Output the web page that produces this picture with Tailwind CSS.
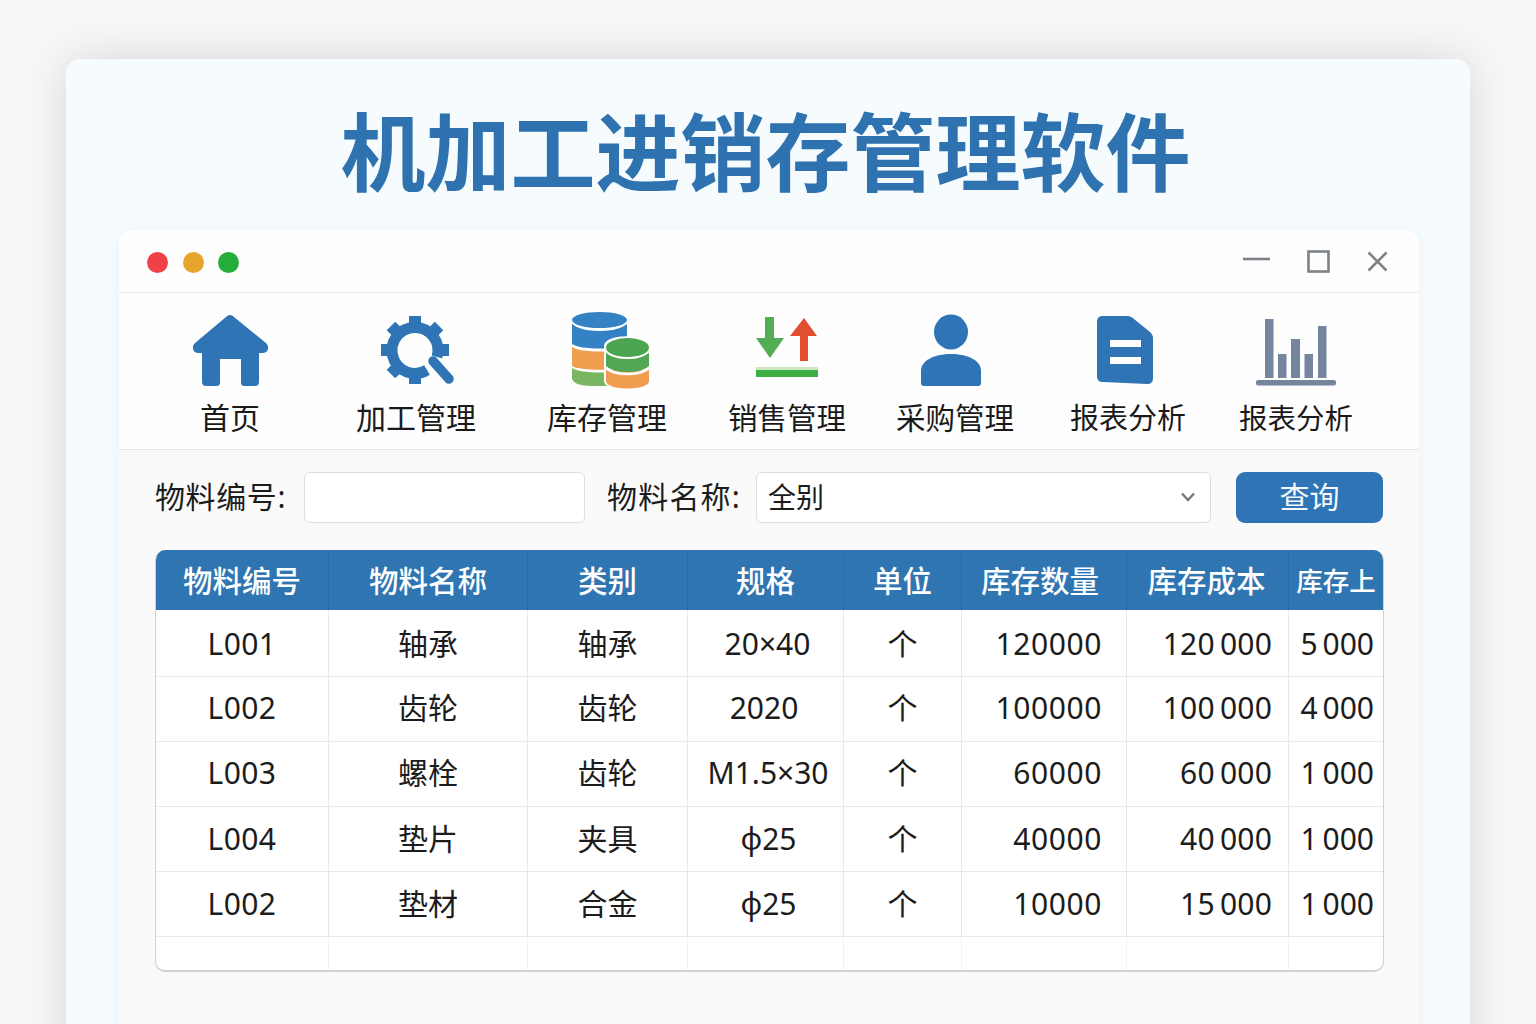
<!DOCTYPE html>
<html lang="zh">
<head>
<meta charset="utf-8">
<script src="https://cdn.jsdelivr.net/npm/@tailwindcss/browser@4"></script>
</head>
<body class="bg-[#f7f7f7]">
<div class="h-[1024px] overflow-hidden pt-[59px] pl-[66px] font-['Noto_Sans','Noto_Sans_CJK_SC',sans-serif] text-[#1c1c1c]">
  <div class="w-[1404px] h-[1100px] rounded-t-[14px] bg-[#f6fbfe] shadow-[0_0_45px_rgba(0,0,0,0.13)] pl-[53px]">
    <div class="h-[171px] w-[1293px] flex items-center justify-center pt-[16px]">
      <h1 class="text-[85px] leading-none font-bold text-[#2e72b0] whitespace-nowrap">机加工进销存管理软件</h1>
    </div>
    <div class="w-[1300px] h-[900px] rounded-t-[14px] bg-[#fafafa] shadow-[0_0_14px_rgba(120,140,160,0.08)]">
      <!-- title bar -->
      <div class="h-[63px] bg-[#fefefe] rounded-t-[14px] border-b border-[#e8eaec] flex items-center justify-between pl-[28px] pr-[28px]">
        <div class="flex items-center gap-[14.5px] pt-[2px]">
          <span class="w-[21px] h-[21px] rounded-full bg-[#f04149]"></span>
          <span class="w-[21px] h-[21px] rounded-full bg-[#e7a52b]"></span>
          <span class="w-[21px] h-[21px] rounded-full bg-[#25ad3a]"></span>
        </div>
        <svg width="150" height="30" viewBox="1241 246 150 30" fill="none" stroke="#7c8287" stroke-width="2.6">
          <path d="M1243 259H1270"/>
          <rect x="1308.5" y="251.5" width="20" height="20"/>
          <path d="M1368.5 252.5L1386.5 270.5M1386.5 252.5L1368.5 270.5"/>
        </svg>
      </div>
      <!-- nav -->
      <div class="h-[157px] bg-[#fefefe] border-b border-[#e4e6e8] flex pl-[21px] pt-[18px] text-[30px] leading-[40px] text-[#1a1a1a]">
        <div class="w-[180px] flex flex-col items-center">
          <svg width="100" height="78" viewBox="180 311 100 78">
            <path fill="#2f75b5" d="M230 315C232 315 233 316 234 317L266 343C270 347 268 353 263 353H259V382C259 385 257 386 255 386H245C242 386 241 385 241 382V359H220V382C220 385 219 386 216 386H206C204 386 202 385 202 382V353H198C193 353 191 347 195 343L226 317C227 316 228 315 230 315Z"/>
          </svg>
          <span class="mt-[9px]">首页</span>
        </div>
        <div class="w-[192px] flex flex-col items-center">
          <svg width="100" height="78" viewBox="366 311 100 78">
            <g fill="#2f75b5">
              <rect x="409" y="316" width="12" height="14"/>
              <rect x="409" y="316" width="12" height="14" transform="rotate(45 415 350)"/>
              <rect x="409" y="316" width="12" height="14" transform="rotate(90 415 350)"/>
              <rect x="409" y="316" width="12" height="14" transform="rotate(180 415 350)"/>
              <rect x="409" y="316" width="12" height="14" transform="rotate(225 415 350)"/>
              <rect x="409" y="316" width="12" height="14" transform="rotate(270 415 350)"/>
              <rect x="409" y="316" width="12" height="14" transform="rotate(315 415 350)"/>
            </g>
            <path fill="none" stroke="#2f75b5" stroke-width="11" d="M427 370A23 23 0 1 1 437 357"/>
            <path fill="none" stroke="#2f75b5" stroke-width="9.500" stroke-linecap="round" d="M433 361L449 379"/>
            <path fill="#2f75b5" d="M408 370H423C428 370 428 377 423 377H414Z"/>
          </svg>
          <span class="mt-[9px]">加工管理</span>
        </div>
        <div class="w-[190px] flex flex-col items-center">
          <svg width="100" height="78" viewBox="557 311 100 78">
            <path fill="#7ab662" d="M572 366H627V386H592C580 386 572 383 572 378Z"/>
            <path fill="#fefefe" d="M572 363C580 369 619 369 627 363V368C619 374 580 374 572 368Z"/>
            <path fill="#f09d50" d="M572 345H627V366C619 371 580 371 572 366Z"/>
            <path fill="#fefefe" d="M572 342C580 348 619 348 627 342V347C619 353 580 353 572 347Z"/>
            <path fill="#3481c4" d="M572 320H627V344C619 350 580 350 572 344Z"/>
            <ellipse cx="599.5" cy="321" rx="28.5" ry="10" fill="#fefefe"/>
            <ellipse cx="599.5" cy="320" rx="27.5" ry="8" fill="#3481c4"/>
            <path fill="#fefefe" d="M604 346C604 333 651 333 651 346V381C651 393 604 393 604 381Z"/>
            <path fill="#f09d50" d="M606 370H649V381C649 391 606 391 606 381Z"/>
            <path fill="#52a755" d="M606 350H649V366C640 374 615 374 606 366Z"/>
            <path fill="none" stroke="#fefefe" stroke-width="2.500" d="M606 368C615 376 640 376 649 368"/>
            <path fill="none" stroke="#fefefe" stroke-width="2.500" d="M606 351C615 360 640 360 649 351"/>
            <ellipse cx="627.5" cy="347.500" rx="21.5" ry="9.500" fill="#4ca550"/>
          </svg>
          <span class="mt-[9px]">库存管理</span>
        </div>
        <div class="w-[170px] flex flex-col items-center">
          <svg width="100" height="78" viewBox="737 311 100 78">
            <path fill="#52ad54" d="M765 317H774V338H784L770 358L756 338H765Z"/>
            <path fill="#e14f2f" d="M804 318L817 336H808V361H800V336H790Z"/>
            <rect x="756" y="367" width="62" height="3" fill="#cfe6c4"/>
            <rect x="756" y="370" width="62" height="7" fill="#3fae45"/>
          </svg>
          <span class="mt-[9px] text-[29.5px]">销售管理</span>
        </div>
        <div class="w-[166px] flex flex-col items-center">
          <svg width="100" height="78" viewBox="905 311 100 78">
            <ellipse cx="951" cy="332" rx="17" ry="17.5" fill="#2f75b5"/>
            <path fill="#2f75b5" d="M921 371C921 360 935 354 951 354C967 354 981 360 981 371V383C981 385 980 386 978 386H924C922 386 921 385 921 383Z"/>
          </svg>
          <span class="mt-[9px] text-[29.5px]">采购管理</span>
        </div>
        <div class="w-[180px] flex flex-col items-center">
          <svg width="100" height="78" viewBox="1078 311 100 78">
            <path fill="#2f75b5" d="M1103 316H1127C1130 316 1132 317 1134 319L1150 332C1152 334 1153 336 1153 338V378C1153 382 1151 384 1147 384L1103 382C1099 382 1097 380 1097 376V322C1097 318 1099 316 1103 316Z"/>
            <rect x="1110" y="340" width="31" height="7" fill="#fefefe"/>
            <rect x="1110" y="357" width="31" height="7" fill="#fefefe"/>
          </svg>
          <span class="mt-[9px] text-[29px]">报表分析</span>
        </div>
        <div class="w-[156px] flex flex-col items-center">
          <svg width="100" height="78" viewBox="1246 311 100 78" fill="#74859d">
            <rect x="1265" y="319" width="8.500" height="59"/>
            <rect x="1278" y="354" width="8.500" height="24"/>
            <rect x="1291" y="339" width="9" height="39"/>
            <rect x="1304.500" y="354" width="8.500" height="24"/>
            <rect x="1318" y="326" width="8.500" height="52"/>
            <rect x="1256" y="380" width="80" height="5.500" rx="2"/>
          </svg>
          <span class="mt-[9px] text-[28.5px]">报表分析</span>
        </div>
      </div>
      <!-- filter -->
      <div class="flex items-center pl-[36px] pt-[20px] h-[74px] text-[30px] leading-[40px]">
        <label class="w-[149px] whitespace-nowrap tracking-[0.6px]">物料编号:</label>
        <div class="w-[281px] h-[51px] bg-white border border-[#dcdfe2] rounded-[6px]"></div>
        <label class="w-[149px] ml-[22px] whitespace-nowrap tracking-[1.2px]">物料名称:</label>
        <div class="w-[455px] h-[51px] bg-white border border-[#dcdfe2] rounded-[6px] flex items-center justify-between pl-[11px] pr-[14px]">
          <span class="text-[28px]">全别</span>
          <svg width="16" height="12" viewBox="0 0 16 12" fill="none" stroke="#777" stroke-width="2.4"><path d="M2 2.500L8 9L14 2.500"/></svg>
        </div>
        <button class="w-[147px] h-[51px] ml-[25px] bg-[#2f75b5] rounded-[9px] text-[#f4f8fc]">查询</button>
      </div>
      <!-- table -->
      <div class="ml-[36px] mt-[26px] w-[1229px] h-[422px] rounded-[10px] border-b-2 border-r border-l border-[#cfd1d4] bg-white text-[30px] leading-[40px] overflow-hidden grid grid-cols-[173px_199px_160px_156px_118px_165px_162px_94px] grid-rows-[60px_67px_65px_65px_65px_65px_33px]">
        <div class="bg-[#2f75b1] border-r border-[#2a6aa3] font-medium text-white text-[29.5px] flex items-center justify-center pt-[2px]">物料编号</div>
        <div class="bg-[#2f75b1] border-r border-[#2a6aa3] font-medium text-white text-[29.5px] flex items-center justify-center pt-[2px]">物料名称</div>
        <div class="bg-[#2f75b1] border-r border-[#2a6aa3] font-medium text-white text-[29.5px] flex items-center justify-center pt-[2px]">类别</div>
        <div class="bg-[#2f75b1] border-r border-[#2a6aa3] font-medium text-white text-[29.5px] flex items-center justify-center pt-[2px]">规格</div>
        <div class="bg-[#2f75b1] border-r border-[#2a6aa3] font-medium text-white text-[29.5px] flex items-center justify-center pt-[2px]">单位</div>
        <div class="bg-[#2f75b1] border-r border-[#2a6aa3] font-medium text-white text-[29.5px] flex items-center justify-center pt-[2px] pr-[8px]">库存数量</div>
        <div class="bg-[#2f75b1] border-r border-[#2a6aa3] font-medium text-white text-[29.5px] flex items-center justify-center pt-[2px] pr-[2px]">库存成本</div>
        <div class="bg-[#2f75b1] font-medium text-white text-[26.5px] flex items-center justify-center pt-[2px] whitespace-nowrap">库存上</div>

        <div class="border-r border-b border-[#e8e9eb] flex items-center justify-center pt-[2px] tracking-[0.4px]">L001</div>
        <div class="border-r border-b border-[#e8e9eb] flex items-center justify-center pt-[2px]">轴承</div>
        <div class="border-r border-b border-[#e8e9eb] flex items-center justify-center pt-[2px]">轴承</div>
        <div class="border-r border-b border-[#e8e9eb] flex items-center justify-center pt-[2px] pl-[4px]">20×40</div>
        <div class="border-r border-b border-[#e8e9eb] flex items-center justify-center pt-[2px]">个</div>
        <div class="border-r border-b border-[#e8e9eb] flex items-center justify-end pt-[2px] pr-[24px] tracking-[0.6px]">120000</div>
        <div class="border-r border-b border-[#e8e9eb] flex items-center justify-end pt-[2px] pr-[16px] tracking-[0.2px]">120&#8201;000</div>
        <div class="border-b border-[#e8e9eb] flex items-center justify-end pt-[2px] pr-[9px]">5&#8201;000</div>

        <div class="border-r border-b border-[#e8e9eb] flex items-center justify-center pb-[2px] tracking-[0.4px]">L002</div>
        <div class="border-r border-b border-[#e8e9eb] flex items-center justify-center pb-[2px]">齿轮</div>
        <div class="border-r border-b border-[#e8e9eb] flex items-center justify-center pb-[2px]">齿轮</div>
        <div class="border-r border-b border-[#e8e9eb] flex items-center justify-center pb-[2px] pr-[3px]">2020</div>
        <div class="border-r border-b border-[#e8e9eb] flex items-center justify-center pb-[2px]">个</div>
        <div class="border-r border-b border-[#e8e9eb] flex items-center justify-end pb-[2px] pr-[24px] tracking-[0.6px]">100000</div>
        <div class="border-r border-b border-[#e8e9eb] flex items-center justify-end pb-[2px] pr-[16px] tracking-[0.2px]">100&#8201;000</div>
        <div class="border-b border-[#e8e9eb] flex items-center justify-end pb-[2px] pr-[9px]">4&#8201;000</div>

        <div class="border-r border-b border-[#e8e9eb] flex items-center justify-center pb-[2px] tracking-[0.4px]">L003</div>
        <div class="border-r border-b border-[#e8e9eb] flex items-center justify-center pb-[2px]">螺栓</div>
        <div class="border-r border-b border-[#e8e9eb] flex items-center justify-center pb-[2px]">齿轮</div>
        <div class="border-r border-b border-[#e8e9eb] flex items-center justify-center pb-[2px] pl-[5px]">M1.5×30</div>
        <div class="border-r border-b border-[#e8e9eb] flex items-center justify-center pb-[2px]">个</div>
        <div class="border-r border-b border-[#e8e9eb] flex items-center justify-end pb-[2px] pr-[24px] tracking-[0.6px]">60000</div>
        <div class="border-r border-b border-[#e8e9eb] flex items-center justify-end pb-[2px] pr-[16px] tracking-[0.2px]">60&#8201;000</div>
        <div class="border-b border-[#e8e9eb] flex items-center justify-end pb-[2px] pr-[9px]">1&#8201;000</div>

        <div class="border-r border-b border-[#e8e9eb] flex items-center justify-center tracking-[0.4px]">L004</div>
        <div class="border-r border-b border-[#e8e9eb] flex items-center justify-center">垫片</div>
        <div class="border-r border-b border-[#e8e9eb] flex items-center justify-center">夹具</div>
        <div class="border-r border-b border-[#e8e9eb] flex items-center justify-center pl-[6px]">φ25</div>
        <div class="border-r border-b border-[#e8e9eb] flex items-center justify-center">个</div>
        <div class="border-r border-b border-[#e8e9eb] flex items-center justify-end pr-[24px] tracking-[0.6px]">40000</div>
        <div class="border-r border-b border-[#e8e9eb] flex items-center justify-end pr-[16px] tracking-[0.2px]">40&#8201;000</div>
        <div class="border-b border-[#e8e9eb] flex items-center justify-end pr-[9px]">1&#8201;000</div>

        <div class="border-r border-b border-[#e8e9eb] flex items-center justify-center tracking-[0.4px]">L002</div>
        <div class="border-r border-b border-[#e8e9eb] flex items-center justify-center">垫材</div>
        <div class="border-r border-b border-[#e8e9eb] flex items-center justify-center">合金</div>
        <div class="border-r border-b border-[#e8e9eb] flex items-center justify-center pl-[6px]">φ25</div>
        <div class="border-r border-b border-[#e8e9eb] flex items-center justify-center">个</div>
        <div class="border-r border-b border-[#e8e9eb] flex items-center justify-end pr-[24px] tracking-[0.6px]">10000</div>
        <div class="border-r border-b border-[#e8e9eb] flex items-center justify-end pr-[16px] tracking-[0.2px]">15&#8201;000</div>
        <div class="border-b border-[#e8e9eb] flex items-center justify-end pr-[9px]">1&#8201;000</div>

        <div class="border-r border-[#f0f1f2]"></div>
        <div class="border-r border-[#f0f1f2]"></div>
        <div class="border-r border-[#f0f1f2]"></div>
        <div class="border-r border-[#f0f1f2]"></div>
        <div class="border-r border-[#f0f1f2]"></div>
        <div class="border-r border-[#f0f1f2]"></div>
        <div class="border-r border-[#f0f1f2]"></div>
        <div></div>
      </div>
    </div>
  </div>
</div>
</body>
</html>
